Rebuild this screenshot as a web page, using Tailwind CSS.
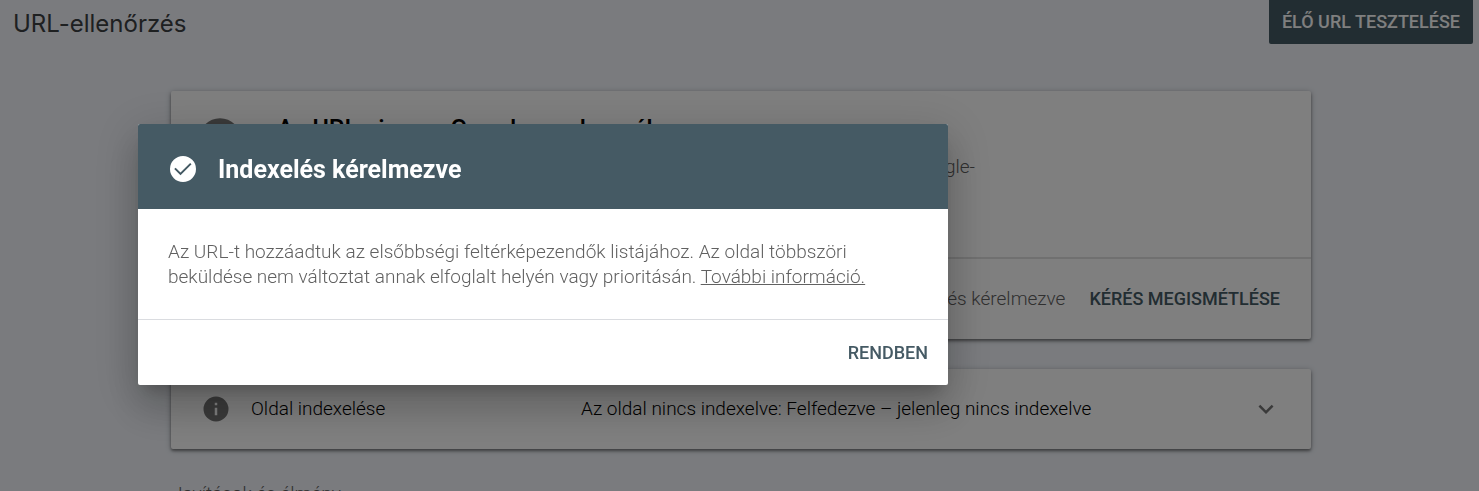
<!DOCTYPE html>
<html lang="hu">
<head>
  <meta charset="UTF-8" />
  <meta name="viewport" content="width=device-width, initial-scale=1.0"/>
  <title>URL-ellenőrzés</title>
  <script src="https://cdn.jsdelivr.net/npm/@tailwindcss/browser@4"></script>
</head>
<body class="h-screen overflow-hidden bg-[#f4f7fd] font-['Roboto',sans-serif] text-[19px] font-light leading-[25px] text-black">
  <header class="flex items-start justify-between pl-[13px] pr-[6px]">
    <h1 class="pt-2 font-['Inter',sans-serif] text-[24px] font-normal leading-[32px] text-[#3c4043]">URL-ellenőrzés</h1>
    <button class="h-11 rounded-b-xs bg-[#455a64] px-[13px] pb-0.5 text-[18px] font-medium text-white">ÉLŐ URL TESZTELÉSE</button>
  </header>

  <main class="pl-[171px] pr-[168px] pt-[47px]">
    <section class="rounded-xs bg-white shadow-[0_2px_3px_rgba(0,0,0,0.4),0_1px_6px_rgba(0,0,0,0.25)]">
      <div class="flex h-[166px] gap-8 pl-6 pt-[23px]">
        <svg class="size-[50px] shrink-0" viewBox="0 0 24 24" fill="#757575">
          <path d="M12 2a10 10 0 1 0 0 20 10 10 0 0 0 0-20zm1 15h-2v-6h2v6zm0-8h-2V7h2v2z"/>
        </svg>
        <div class="w-[698px]">
          <h2 class="text-[25px] font-medium leading-[32px]">Az URL nincs a Google rendszerében</h2>
          <p class="mt-2 text-justify text-[#616161]">Ez az oldal nem szerepel az indexben, de nem hiba miatt. Nézze meg a Google-találatok részleteit.</p>
        </div>
      </div>
      <div class="flex h-[82px] items-center justify-end gap-6 border-t-2 border-[#e0e0e0] px-[31px] pb-0.5">
        <span class="text-[#616161]">Indexelés kérelmezve</span>
        <button class="text-[18px] font-medium text-[#455a64]">KÉRÉS MEGISMÉTLÉSE</button>
      </div>
    </section>

    <section class="mt-[30px] rounded-xs bg-white shadow-[0_2px_3px_rgba(0,0,0,0.4),0_1px_6px_rgba(0,0,0,0.25)]">
      <button class="flex h-20 w-full items-center px-[30px] text-left">
        <svg class="size-[30px]" viewBox="0 0 24 24" fill="#757575">
          <path d="M12 2a10 10 0 1 0 0 20 10 10 0 0 0 0-20zm1 15h-2v-6h2v6zm0-8h-2V7h2v2z"/>
        </svg>
        <span class="ml-5 w-[330px] pb-0.5">Oldal indexelése</span>
        <span class="flex-1 pb-0.5">Az oldal nincs indexelve: Felfedezve – jelenleg nincs indexelve</span>
        <svg class="size-[30px]" viewBox="0 0 24 24" fill="#757575">
          <path d="M7.41 8.59 12 13.17l4.59-4.58L18 10l-6 6-6-6z"/>
        </svg>
      </button>
    </section>

    <h3 class="mt-8 pl-px font-light text-[#616161]">Javítások és élmény</h3>
  </main>

  <div class="fixed inset-0 bg-black/50 pl-[138px] pt-31">
    <div role="dialog" aria-labelledby="dialog-title" class="max-w-[810px] overflow-hidden rounded-xs bg-white shadow-[0_11px_15px_-7px_rgba(0,0,0,0.2),0_24px_38px_3px_rgba(0,0,0,0.14),0_9px_46px_8px_rgba(0,0,0,0.12)]">
      <div class="flex h-[85px] items-center gap-5 bg-[#455a64] px-[30px] pt-1 text-white">
        <svg class="size-[30px]" viewBox="0 0 24 24" fill="currentColor">
          <path d="M12 1.6a10.4 10.4 0 1 0 0 20.8 10.4 10.4 0 0 0 0-20.8zM10 17l-5-5 1.1-1.1 3.9 3.9 7.7-7.7L18.8 8.2z"/>
        </svg>
        <h2 id="dialog-title" class="pt-0.5 text-[25px] font-bold leading-[32px]">Indexelés kérelmezve</h2>
      </div>
      <p class="px-[30px] py-[30px] text-[#616161]">Az URL-t hozzáadtuk az elsőbbségi feltérképezendők listájához. Az oldal többszöri beküldése nem változtat annak elfoglalt helyén vagy prioritásán. <a href="#" class="underline">További információ.</a></p>
      <div class="flex h-[66px] items-center justify-end border-t border-[#dadce0] px-5">
        <button class="text-[18px] font-medium text-[#455a64]">RENDBEN</button>
      </div>
    </div>
  </div>
</body>
</html>
